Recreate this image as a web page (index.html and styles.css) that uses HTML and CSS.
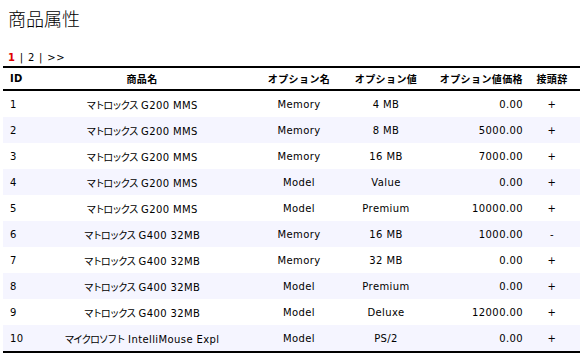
FILE: index.html
```html
<!DOCTYPE html>
<html lang="ja">
<head>
<meta charset="utf-8">
<link rel="stylesheet" href="styles.css">
</head>
<body>
<div class="page">
  <h1 class="title">商品属性</h1>
  <div class="pager"><span class="current">1</span> | 2 | &gt;&gt;</div>
  <table class="attrs">
    <colgroup>
      <col class="c-id"><col class="c-name"><col class="c-opt"><col class="c-val"><col class="c-price"><col class="c-pre">
    </colgroup>
    <thead>
      <tr><th class="l">ID</th><th>商品名</th><th>オプション名</th><th>オプション値</th><th class="r">オプション値価格</th><th>接頭辞</th></tr>
    </thead>
    <tbody>
      <tr><td class="l">1</td><td><span class="kana">マトロックス</span> G200 MMS</td><td>Memory</td><td>4 MB</td><td class="r">0.00</td><td>+</td></tr>
      <tr><td class="l">2</td><td><span class="kana">マトロックス</span> G200 MMS</td><td>Memory</td><td>8 MB</td><td class="r">5000.00</td><td>+</td></tr>
      <tr><td class="l">3</td><td><span class="kana">マトロックス</span> G200 MMS</td><td>Memory</td><td>16 MB</td><td class="r">7000.00</td><td>+</td></tr>
      <tr><td class="l">4</td><td><span class="kana">マトロックス</span> G200 MMS</td><td>Model</td><td>Value</td><td class="r">0.00</td><td>+</td></tr>
      <tr><td class="l">5</td><td><span class="kana">マトロックス</span> G200 MMS</td><td>Model</td><td>Premium</td><td class="r">10000.00</td><td>+</td></tr>
      <tr><td class="l">6</td><td><span class="kana">マトロックス</span> G400 32MB</td><td>Memory</td><td>16 MB</td><td class="r">1000.00</td><td>-</td></tr>
      <tr><td class="l">7</td><td><span class="kana">マトロックス</span> G400 32MB</td><td>Memory</td><td>32 MB</td><td class="r">0.00</td><td>+</td></tr>
      <tr><td class="l">8</td><td><span class="kana">マトロックス</span> G400 32MB</td><td>Model</td><td>Premium</td><td class="r">0.00</td><td>+</td></tr>
      <tr><td class="l">9</td><td><span class="kana">マトロックス</span> G400 32MB</td><td>Model</td><td>Deluxe</td><td class="r">12000.00</td><td>+</td></tr>
      <tr><td class="l">10</td><td><span class="kana">マイクロソフト</span> IntelliMouse Expl</td><td>Model</td><td>PS/2</td><td class="r">0.00</td><td>+</td></tr>
    </tbody>
  </table>
</div>
</body>
</html>
```

FILE: styles.css
```css
html, body {
  margin: 0;
  padding: 0;
  background: #fff;
}
.page {
  padding: 0 0 0 3px;
  font-family: "DejaVu Sans", Verdana, "Noto Sans CJK JP", sans-serif;
  font-size: 10px;
  letter-spacing: 0.4px;
  color: #000;
}
.title {
  margin: 0;
  padding: 5px 0 0 5px;
  height: 26px;
  font-family: "Noto Sans CJK JP", sans-serif;
  font-weight: 300;
  font-size: 18px;
  line-height: 26px;
  letter-spacing: 0;
}
.pager {
  margin-top: 20px;
  padding-left: 5px;
  height: 14px;
  line-height: 14px;
  letter-spacing: 0.8px;
}
.pager .current {
  color: #e00000;
  font-weight: bold;
}
.attrs {
  margin-top: 1px;
  width: 577px;
  border-collapse: collapse;
  table-layout: fixed;
}
.c-id { width: 35px; }
.c-name { width: 208px; }
.c-opt { width: 106px; }
.c-val { width: 68px; }
.c-price { width: 104px; }
.c-pre { width: 56px; }
.attrs th {
  height: 21px;
  padding: 0 2px;
  font-weight: bold;
  text-align: center;
  border-top: 2px solid #000;
  border-bottom: 2px solid #000;
  white-space: nowrap;
}
.attrs td {
  height: 26px;
  padding: 0 2px;
  text-align: center;
  white-space: nowrap;
  overflow: hidden;
}
.kana {
  letter-spacing: -1.4px;
}
.attrs .l { text-align: left; padding-left: 7px; }
.attrs .r { text-align: right; padding-right: 1px; }
.attrs tbody tr:nth-child(even) td { background: #f5f5ff; }
.attrs tbody tr:last-child td { border-bottom: 2px solid #000; }
```
